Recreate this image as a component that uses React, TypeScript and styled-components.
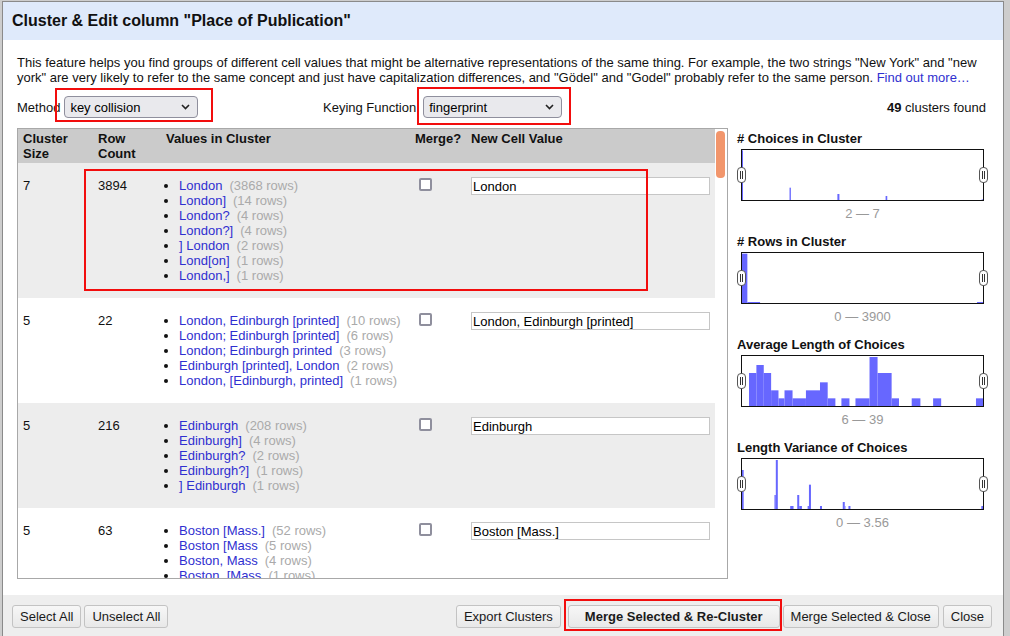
import React from "react";
import styled, { createGlobalStyle } from "styled-components";

const GlobalStyle = createGlobalStyle`
  html, body {
    margin: 0;
    padding: 0;
    overflow: hidden;
    background: #cdcdcd;
    font-family: "Liberation Sans", Arial, Helvetica, sans-serif;
    font-size: 13px;
    color: #000;
  }
  * { box-sizing: border-box; }
`;

const Dialog = styled.div`
  margin: 1px 0 0 2px;
  width: 1002px;
  height: 700px;
  border: 1px solid #8a8a8a;
  background: #fff;
  display: flex;
  flex-direction: column;
`;

const Header = styled.div`
  height: 38px;
  background: #dfeafb;
  padding-left: 9px;
  display: flex;
  align-items: center;
  font-size: 16px;
  font-weight: bold;
  color: #111;
`;

const Body = styled.div`
  padding: 15px 17px 0 14px;
`;

const Description = styled.p`
  margin: 0;
  line-height: 15px;
  color: #111;
`;

const Link = styled.a`
  color: #3030cf;
  text-decoration: none;
`;

const Controls = styled.div`
  margin-top: 11px;
  height: 22px;
  display: flex;
  align-items: center;
`;

const ControlGroup = styled.div<{ $width?: number; $gap: number }>`
  display: flex;
  align-items: center;
  gap: ${(p) => p.$gap}px;
  ${(p) => (p.$width ? `width: ${p.$width}px;` : "")}
`;

const Label = styled.span`
  color: #111;
`;

const Annotated = styled.div<{ $ml?: number }>`
  position: relative;
  display: inline-flex;
  margin-left: ${(p) => p.$ml ?? 0}px;
`;

const RedBox = styled.div<{ $t: number; $r: number; $b: number; $l: number }>`
  position: absolute;
  top: ${(p) => -p.$t}px;
  right: ${(p) => -p.$r}px;
  bottom: ${(p) => -p.$b}px;
  left: ${(p) => -p.$l}px;
  border: 2px solid #f20d0d;
  pointer-events: none;
`;

const FakeSelect = styled.div<{ $width: number }>`
  width: ${(p) => p.$width}px;
  height: 22px;
  background: #e9e9ed;
  border: 1px solid #8f8f9d;
  border-radius: 4px;
  padding: 0 7px 0 5px;
  display: flex;
  align-items: center;
  justify-content: space-between;
  color: #000;
`;

const Found = styled.div`
  margin-left: auto;
  color: #111;
  b { font-weight: bold; }
`;

const Main = styled.div`
  margin-top: 10px;
  display: flex;
  align-items: flex-start;
`;

const TablePanel = styled.div`
  width: 711px;
  height: 451px;
  border: 1px solid #a8a8a8;
  display: flex;
  overflow: hidden;
`;

const TableScroll = styled.div`
  width: 697px;
  overflow: hidden;
`;

const ScrollTrack = styled.div`
  width: 12px;
  padding: 2px 2px 0 1px;
  background: #fff;
`;

const ScrollThumb = styled.div`
  height: 47px;
  border-radius: 4px;
  background: #f2966c;
`;

const GridRow = styled.div<{ $alt?: boolean; $head?: boolean }>`
  position: relative;
  display: grid;
  grid-template-columns: 75px 68px 249px 56px 249px;
  background: ${(p) => (p.$head ? "#cbcbcb" : p.$alt ? "#ededed" : "#fff")};
  ${(p) => (p.$head ? "height: 34px; font-weight: bold; color: #111;" : "")}
`;

const Cell = styled.div<{ $head?: boolean }>`
  padding: ${(p) => (p.$head ? "2px 5px 0" : "15px 5px 15px")};
  line-height: 15px;
  color: #111;
`;

const Values = styled.ul`
  margin: 0;
  padding: 0 0 0 13px;
  list-style: disc;
  li { line-height: 15px; }
`;

const ValueLink = styled.a`
  color: #2f2fd0;
  text-decoration: none;
`;

const Count = styled.span`
  color: #aaa;
  margin-left: 7px;
`;

const Check = styled.span`
  display: block;
  width: 13px;
  height: 13px;
  margin: 0 0 0 4px;
  border: 2px solid #8f8f9d;
  border-radius: 2px;
  background: #fff;
`;

const ValueInput = styled.input`
  display: block;
  width: 100%;
  height: 18px;
  margin-top: -1px;
  border: 1px solid #c6c6c6;
  padding: 0 1px;
  font: inherit;
  color: #000;
  background: #fff;
  outline: none;
`;

const RowMark = styled.div`
  position: absolute;
  left: 66px;
  top: 6px;
  width: 564px;
  height: 122px;
  border: 2px solid #f20d0d;
  pointer-events: none;
`;

const Side = styled.div`
  padding: 3px 0 0 9px;
  display: flex;
  flex-direction: column;
`;

const Facet = styled.div`
  display: flex;
  flex-direction: column;
  height: 103px;
`;

const FacetTitle = styled.div`
  font-weight: bold;
  line-height: 15px;
  color: #111;
`;

const Chart = styled.div`
  position: relative;
  margin: 3px 0 0 4px;
  width: 243px;
  height: 52px;
  border: 1px solid #111;
  background: #fff;
`;

const ChartSvg = styled.svg`
  display: block;
  width: 241px;
  height: 50px;
`;

const Handle = styled.div<{ $side: "left" | "right" }>`
  position: absolute;
  top: 17px;
  ${(p) => (p.$side === "left" ? "left: -5px;" : "right: -5px;")}
  width: 9px;
  height: 16px;
`;

const Range = styled.div`
  margin: 5px 0 0 4px;
  width: 243px;
  text-align: center;
  line-height: 15px;
  color: #999;
`;

const Footer = styled.div`
  margin-top: 16px;
  flex: 1;
  background: #eeeeee;
  padding: 10px 11px 0 9px;
  display: flex;
  align-items: flex-start;
`;

const ButtonGroup = styled.div`
  display: flex;
  gap: 3px;
`;

const Button = styled.button<{ $primary?: boolean; $ml?: number }>`
  height: 23px;
  margin-left: ${(p) => p.$ml ?? 0}px;
  padding: 0 ${(p) => (p.$primary ? "16px" : "7px")};
  font-family: inherit;
  font-size: 13px;
  font-weight: ${(p) => (p.$primary ? "bold" : "normal")};
  color: #1a1a1a;
  background: linear-gradient(#f7f7f7, #e8e8e8);
  border: 1px solid #c3c3c3;
  border-radius: 3px;
  line-height: 21px;
  white-space: nowrap;
`;

const RightButtons = styled.div`
  margin-left: auto;
  display: flex;
  align-items: flex-start;
`;

const Chevron = () => (
  <svg width="9" height="6" viewBox="0 0 9 6">
    <path d="M1 1 L4.5 4.5 L8 1" fill="none" stroke="#222" strokeWidth="1.6" />
  </svg>
);

const HandleIcon = () => (
  <svg width="9" height="16" viewBox="0 0 9 16">
    <rect x="0.5" y="0.5" width="8" height="15" rx="3.5" fill="#fff" stroke="#555" />
    <line x1="3.5" y1="4" x2="3.5" y2="12" stroke="#333" strokeWidth="1" />
    <line x1="5.5" y1="4" x2="5.5" y2="12" stroke="#333" strokeWidth="1" />
  </svg>
);

type Bar = [number, number, number];

const FACETS: { title: string; range: string; y0: number; bars: Bar[] }[] = [
  {
    title: "# Choices in Cluster",
    range: "2 — 7",
    y0: 75,
    bars: [
      [36, 39, 76],
      [178, 182, 188],
      [321, 327, 207],
      [465, 470, 213],
      [752, 756, 223],
    ],
  },
  {
    title: "# Rows in Cluster",
    range: "0 — 3900",
    y0: 384,
    bars: [
      [36, 52, 386],
      [52, 90, 531],
      [738, 756, 531],
    ],
  },
  {
    title: "Average Length of Choices",
    range: "6 — 39",
    y0: 107,
    bars: [
      [57, 79, 158],
      [79, 101, 134],
      [101, 123, 158],
      [123, 145, 210],
      [145, 163, 234],
      [163, 187, 210],
      [187, 227, 234],
      [227, 269, 210],
      [269, 292, 186],
      [292, 315, 234],
      [333, 357, 234],
      [375, 417, 234],
      [417, 441, 110],
      [441, 483, 158],
      [483, 505, 234],
      [543, 569, 234],
      [607, 631, 234],
      [735, 756, 234],
    ],
  },
  {
    title: "Length Variance of Choices",
    range: "0 — 3.56",
    y0: 417,
    bars: [
      [36, 41, 450],
      [133, 137, 525],
      [137, 143, 420],
      [180, 190, 558],
      [201, 207, 525],
      [207, 215, 558],
      [232, 236, 558],
      [236, 242, 494],
      [269, 275, 558],
      [337, 343, 546],
      [343, 345, 558],
      [354, 360, 558],
      [751, 756, 558],
    ],
  },
];

type Cluster = {
  size: number;
  rows: number;
  values: [string, number][];
  value: string;
  marked?: boolean;
};

const CLUSTERS: Cluster[] = [
  {
    size: 7,
    rows: 3894,
    marked: true,
    value: "London",
    values: [
      ["London", 3868],
      ["London]", 14],
      ["London?", 4],
      ["London?]", 4],
      ["] London", 2],
      ["Lond[on]", 1],
      ["London,]", 1],
    ],
  },
  {
    size: 5,
    rows: 22,
    value: "London, Edinburgh [printed]",
    values: [
      ["London, Edinburgh [printed]", 10],
      ["London; Edinburgh [printed]", 6],
      ["London; Edinburgh printed", 3],
      ["Edinburgh [printed], London", 2],
      ["London, [Edinburgh, printed]", 1],
    ],
  },
  {
    size: 5,
    rows: 216,
    value: "Edinburgh",
    values: [
      ["Edinburgh", 208],
      ["Edinburgh]", 4],
      ["Edinburgh?", 2],
      ["Edinburgh?]", 1],
      ["] Edinburgh", 1],
    ],
  },
  {
    size: 5,
    rows: 63,
    value: "Boston [Mass.]",
    values: [
      ["Boston [Mass.]", 52],
      ["Boston [Mass", 5],
      ["Boston, Mass", 4],
      ["Boston, [Mass", 1],
      ["Boston [Mass.", 1],
    ],
  },
];

const Histogram = ({ y0, bars }: { y0: number; bars: Bar[] }) => {
  const bottom = y0 + 150;
  return (
    <ChartSvg viewBox={`36 ${y0} 720 150`} preserveAspectRatio="none">
      {bars.map(([x1, x2, top], i) => (
        <rect key={i} x={x1} y={top} width={x2 - x1} height={bottom - top} fill="#6767ff" />
      ))}
    </ChartSvg>
  );
};

export default function App() {
  return (
    <>
      <GlobalStyle />
      <Dialog>
        <Header>Cluster &amp; Edit column "Place of Publication"</Header>
        <Body>
          <Description>
            This feature helps you find groups of different cell values that might be alternative
            representations of the same thing. For example, the two strings "New York" and "new
            york" are very likely to refer to the same concept and just have capitalization
            differences, and "Gödel" and "Godel" probably refer to the same person.{" "}
            <Link href="#">Find out more…</Link>
          </Description>
          <Controls>
            <ControlGroup $width={306} $gap={4}>
              <Label>Method</Label>
              <Annotated>
                <FakeSelect $width={134}>
                  <span>key collision</span>
                  <Chevron />
                </FakeSelect>
                <RedBox $t={8} $r={15} $b={4} $l={9} />
              </Annotated>
            </ControlGroup>
            <ControlGroup $gap={7}>
              <Label>Keying Function</Label>
              <Annotated>
                <FakeSelect $width={139}>
                  <span>fingerprint</span>
                  <Chevron />
                </FakeSelect>
                <RedBox $t={9} $r={9} $b={7} $l={6} />
              </Annotated>
            </ControlGroup>
            <Found>
              <b>49</b> clusters found
            </Found>
          </Controls>
          <Main>
            <TablePanel>
              <TableScroll>
                <GridRow $head>
                  <Cell $head>Cluster Size</Cell>
                  <Cell $head>Row Count</Cell>
                  <Cell $head>Values in Cluster</Cell>
                  <Cell $head>Merge?</Cell>
                  <Cell $head>New Cell Value</Cell>
                </GridRow>
                {CLUSTERS.map((c, i) => (
                  <GridRow key={i} $alt={i % 2 === 0}>
                    <Cell>{c.size}</Cell>
                    <Cell>{c.rows}</Cell>
                    <Cell>
                      <Values>
                        {c.values.map(([v, n], j) => (
                          <li key={j}>
                            <ValueLink href="#">{v}</ValueLink>
                            <Count>({n} rows)</Count>
                          </li>
                        ))}
                      </Values>
                    </Cell>
                    <Cell>
                      <Check />
                    </Cell>
                    <Cell>
                      <ValueInput readOnly value={c.value} />
                    </Cell>
                    {c.marked && <RowMark />}
                  </GridRow>
                ))}
              </TableScroll>
              <ScrollTrack>
                <ScrollThumb />
              </ScrollTrack>
            </TablePanel>
            <Side>
              {FACETS.map((f) => (
                <Facet key={f.title}>
                  <FacetTitle>{f.title}</FacetTitle>
                  <Chart>
                    <Histogram y0={f.y0} bars={f.bars} />
                    <Handle $side="left">
                      <HandleIcon />
                    </Handle>
                    <Handle $side="right">
                      <HandleIcon />
                    </Handle>
                  </Chart>
                  <Range>{f.range}</Range>
                </Facet>
              ))}
            </Side>
          </Main>
        </Body>
        <Footer>
          <ButtonGroup>
            <Button>Select All</Button>
            <Button>Unselect All</Button>
          </ButtonGroup>
          <RightButtons>
            <Button>Export Clusters</Button>
            <Annotated $ml={7}>
              <Button $primary>Merge Selected &amp; Re-Cluster</Button>
              <RedBox $t={6} $r={2} $b={3} $l={4} />
            </Annotated>
            <Button $ml={3}>Merge Selected &amp; Close</Button>
            <Button $ml={4}>Close</Button>
          </RightButtons>
        </Footer>
      </Dialog>
    </>
  );
}
